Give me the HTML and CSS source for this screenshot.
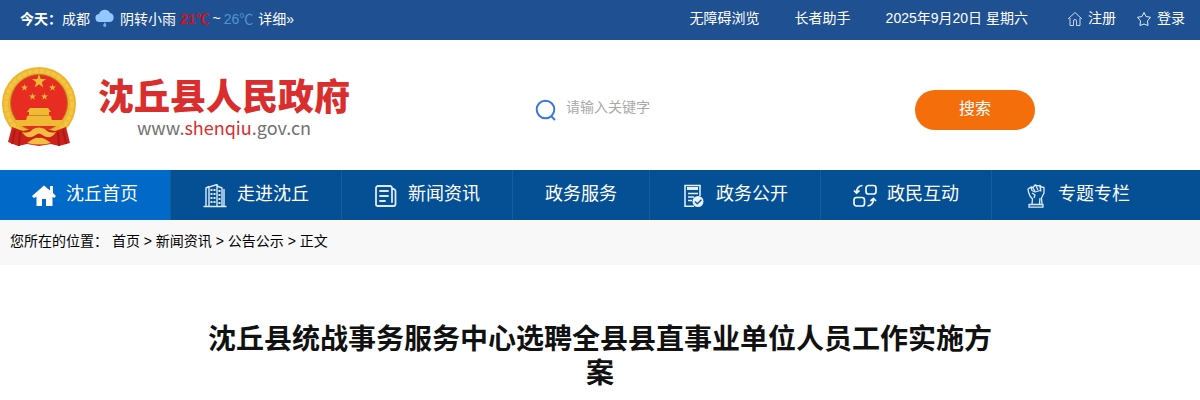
FILE: index.html
```html
<!DOCTYPE html>
<html lang="zh-CN">
<head>
  <meta charset="UTF-8">
  <title>沈丘县人民政府</title>
  <link rel="stylesheet" href="styles.css">
</head>
<body>
  <div class="topbar">
    <div class="weather">
      <strong>今天：</strong>
      <span class="city">成都</span>
      <svg class="weather-icon" width="20" height="18" viewBox="0 0 20 18">
        <path d="M5 13a4 4 0 0 1-1-8 6 6 0 0 1 11-1 4.600 4.600 0 0 1 0 9z" fill="#94c6ff"/>
        <path d="M10 13l-1.500 2.500a1.500 1.500 0 1 0 2.500 0z" fill="#6cb2ff"/>
      </svg>
      <span class="sky">阴转小雨</span>
      <span class="high">21℃</span>
      <span class="tilde">~</span>
      <span class="low">26℃</span>
      <a href="#">详细»</a>
    </div>
    <div class="toplinks">
      <a href="#">无障碍浏览</a>
      <a href="#">长者助手</a>
      <span class="date">2025年9月20日 星期六</span>
      <a class="user-link register" href="#">
        <svg width="16" height="16" viewBox="0 0 16 16" fill="none" stroke="#c5d8f0">
          <path d="M1 8l7-6.500L15 8M3 7v7.500h3.500V10a1.500 1.500 0 0 1 3 0v4.500H13V7"/>
        </svg>注册</a>
      <a class="user-link" href="#">
        <svg width="16" height="16" viewBox="0 0 16 16" fill="none" stroke="#e1ecfa" stroke-linejoin="round">
          <path d="M8 1.500l2 4 4.500.800-3 3.500.500 4.700-4-1.500-4 1.500.500-4.700-3-3.500L6 5.500z"/>
        </svg>登录</a>
    </div>
  </div>

  <header class="header">
    <a class="logo" href="#">
      <svg class="emblem" width="78" height="84" viewBox="0 0 78 84">
        <circle cx="39" cy="40" r="37" fill="#edb52d"/>
        <circle cx="39" cy="40" r="33" fill="none" stroke="#f3c544" stroke-width="4" stroke-dasharray="5 1"/>
        <circle cx="39" cy="39" r="28.500" fill="#e72c22" stroke="#bd7a20"/>
        <g fill="#f0ba35">
          <path id="star" d="M39 10l1.700 5h5.300l-4.200 3.200 1.500 5.200-4.300-3.200-4.300 3.200 1.500-5.200-4.200-3.200h5.300z"/>
          <use href="#star" transform="translate(5 15) scale(.5)"/>
          <use href="#star" transform="translate(33 15) scale(.5)"/>
          <use href="#star" transform="translate(13 24) scale(.5)"/>
          <use href="#star" transform="translate(25 24) scale(.5)"/>
          <path d="M30 44h18l3 4H27zM29 48h20v3H29zM27 52h24l1 5H26zM16 56h46v6H16z"/>
        </g>
        <path d="M28 51.500h22" stroke="#cf8623"/>
        <path d="M12 63l11 4 10-2 6 5 6-5 10 2 11-4 4 16-11 3-8-2-12 2-12-2-9 2-10-4z" fill="#cf211b"/>
        <path d="M15 66l-3 14M20 68l-1 14M63 66l3 14M58 68l1 14" stroke="#a81c18" stroke-width="2"/>
        <path d="M22 68q7 2 11-3 6-3 12 0 4 5 11 3-5 8-12 4l-5-3-5 3q-7 4-12-4zM27 79q8-6 12-5 4-1 12 5-12 3-24 0z" fill="#f3bd3f"/>
      </svg>
      <span class="logo-text">
        <strong>沈丘县人民政府</strong>
        <span class="site-url">www.<em>shenqiu</em>.gov.cn</span>
      </span>
    </a>
    <form class="search">
      <svg class="search-icon" width="22" height="24" viewBox="0 0 22 24" fill="none" stroke="#3a78e0" stroke-width="2">
        <circle cx="10.500" cy="11.500" r="8.800"/>
        <path d="M16 18l4 4"/>
      </svg>
      <input type="text" aria-label="请输入关键字" placeholder="请输入关键字">
      <button type="submit">搜索</button>
    </form>
  </header>

  <nav class="nav">
    <a class="active" href="#">
      <svg width="24" height="24" viewBox="0 0 24 24" fill="#fff">
        <path d="M12 1.500l6 5V2h3v7l3 3-1.800 2-1.700-1.300V22H14v-7h-4v7H4.500v-9.300L1.800 14 0 12z"/>
      </svg><span>沈丘首页</span></a>
    <a href="#">
      <svg width="24" height="24" viewBox="0 0 24 24" fill="none" stroke="#dceafa" stroke-width="1.400">
        <path d="M.500 22.500h23M3 22V4l3-1.500M6 22V3l8-2.500V22M14 2l5 2v18M21 5v17"/>
        <path d="M8.500 5v15M11.500 5v15M16.500 6v14" stroke-width="2" stroke-dasharray="2 2"/>
      </svg><span>走进沈丘</span></a>
    <a href="#">
      <svg width="24" height="24" viewBox="0 0 24 24" fill="none" stroke="#dceafa" stroke-width="1.800" stroke-linecap="round" stroke-linejoin="round">
        <path d="M18 18V4a2 2 0 0 0-2-2H4a2 2 0 0 0-2 2v16.500q0 1.500 2 1.500h15.500q2 0 2-2V7q0-1.500-3.500-3M6 7h8M6 12h8M6 17h5"/>
      </svg><span>新闻资讯</span></a>
    <a href="#"><span>政务服务</span></a>
    <a href="#">
      <svg width="24" height="24" viewBox="0 0 24 24" fill="none" stroke="#e8f2ff" stroke-width="1.500">
        <path d="M12 22.200H3V1.500h15V12M6 9.500h10M6 13h6M6 16.500h4"/>
        <path d="M5 4.500h11" stroke-width="3"/>
        <circle cx="16" cy="17.500" r="5.500" fill="#e8f2ff" stroke="none"/>
        <path d="M13 17.500l2.200 2.200 4.300-4" stroke="#155a9b"/>
      </svg><span>政务公开</span></a>
    <a href="#">
      <svg width="24" height="24" viewBox="0 0 24 24" fill="none" stroke="#f0f6ff" stroke-width="1.700">
        <rect x="13" y="1.500" width="10" height="8.500" rx="2.500"/>
        <rect x="1" y="13.500" width="10.500" height="8.500" rx="2.500"/>
        <path d="M9.500 1.500Q3.500 2 3.500 9M1 6.500L3.500 9l3-2.500M14.500 22q6-.500 6-7.500M17.500 17l3-2.500 2.500 2.500"/>
      </svg><span>政民互动</span></a>
    <a href="#">
      <svg width="24" height="24" viewBox="0 0 24 24" fill="none" stroke="#dceafa" stroke-width="1.300" stroke-linejoin="round">
        <path d="M8 20l.500-5L6 12 4.500 8 4 5l3-2 2 .500L11 1l3 .800 2-.300 1.500 1.500 2.500.500V9l-2.500 5 .500 6M5 20.500h14v2.700H5zM7 3.500l1 3 3 1.500 5-1.500M9 4l2 3M12 2l2 4M16 2.500l1 5M8 9l3 2-1 3M16 14l-.500 6"/>
      </svg><span>专题专栏</span></a>
  </nav>

  <div class="breadcrumb">
    <span class="label">您所在的位置：</span>
    <a href="#">首页</a> &gt; <a href="#">新闻资讯</a> &gt; <a href="#">公告公示</a> &gt; <span>正文</span>
  </div>

  <main class="article">
    <h1>沈丘县统战事务服务中心选聘全县县直事业单位人员工作实施方案</h1>
  </main>
</body>
</html>
```
FILE: styles.css
```css
* {
  box-sizing: border-box;
}
body {
  margin: 0;
  font-family: "Liberation Sans", "Noto Sans CJK SC", sans-serif;
  font-size: 14px;
  color: #000;
  background: #fff;
}
a {
  color: inherit;
  text-decoration: none;
}
svg {
  flex: none;
}
.topbar {
  display: flex;
  justify-content: space-between;
  height: 40px;
  padding: 0 15px 4px 20px;
  background: #1f5192;
  color: #fff;
}
.weather,
.toplinks,
.user-link {
  display: flex;
  align-items: center;
}
.weather-icon {
  margin: 0 5px;
}
.high {
  margin-left: 4px;
  color: #d0131b;
  font-weight: bold;
}
.tilde {
  margin: 0 3px;
}
.low {
  margin-right: 5px;
  color: #4f96cb;
}
.toplinks {
  gap: 35px;
  padding-bottom: 2px;
}
.user-link {
  gap: 5px;
}
.register {
  margin: 0 -15px 0 4px;
}
.user-link svg {
  margin-top: 4px;
}
.header {
  display: flex;
  align-items: center;
  height: 130px;
  padding-top: 2px;
}
.logo {
  display: flex;
  align-items: center;
  width: 535px;
}
.logo-text {
  display: flex;
  flex-direction: column;
  align-items: center;
  margin-left: 20px;
  padding-top: 2px;
  font-family: "Noto Sans CJK SC", sans-serif;
}
.logo-text strong {
  font-size: 36px;
  font-weight: 900;
  line-height: 40px;
  color: #d92e2d;
}
.site-url {
  font-size: 18px;
  line-height: 26px;
  color: #727272;
}
.site-url em {
  font-style: normal;
  color: #d92e2d;
}
.search {
  display: flex;
  align-items: center;
  width: 500px;
  padding-top: 8px;
}
.search input {
  flex: 1;
  min-width: 0;
  height: 40px;
  padding: 0 9px 6px;
  border: 0;
  outline: 0;
  background: none;
  font: inherit;
}
.search input::placeholder {
  color: #a9a9a9;
}
.search button {
  width: 120px;
  height: 40px;
  padding: 0 0 6px;
  border: 0;
  border-radius: 20px;
  background: #f46e0b;
  color: #fff;
  font: inherit;
  font-size: 16px;
}
.nav {
  display: flex;
  height: 50px;
  background: #055095;
  color: #fff;
  font-size: 18px;
}
.nav a {
  display: flex;
  align-items: center;
  gap: 10px;
  padding: 0 32px;
  border-right: 1px solid #165d9f;
}
.nav a:last-child {
  border-right: 0;
}
.nav .active {
  background: #0169c7;
}
.nav svg {
  margin-top: 2px;
}
.nav span {
  padding-bottom: 6px;
}
.breadcrumb {
  height: 45px;
  padding: 0 10px;
  background: #f8f8f8;
  line-height: 42px;
}
.article {
  max-width: 800px;
  margin: 0 auto;
  padding: 58px 0 10px;
}
.article h1 {
  margin: 0;
  font-size: 28px;
  line-height: 34px;
  text-align: center;
  color: #111;
}
```
